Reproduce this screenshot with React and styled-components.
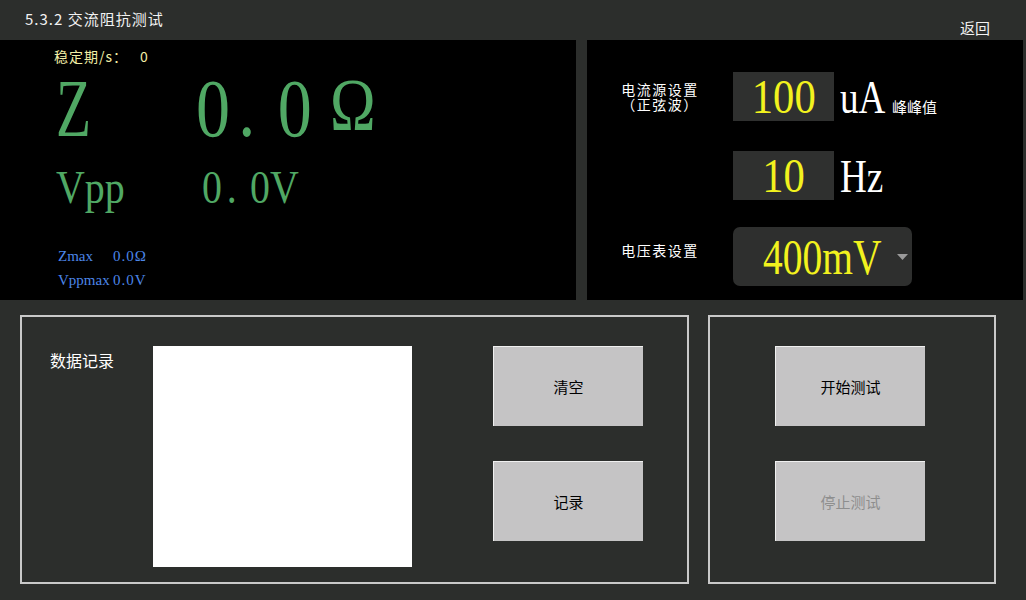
import React from 'react';
import styled, { createGlobalStyle } from 'styled-components';

const cjk = `"Noto Sans CJK SC", "Noto Sans", sans-serif`;
const serif = `"Liberation Serif", "Noto Sans CJK SC", serif`;

const Global = createGlobalStyle`
  html, body {
    margin: 0;
    padding: 0;
    background: #2c2e2c;
  }
`;

/** PAGE **/
const Page = styled.div`
  width: 1026px;
  height: 600px;
  background: #2c2e2c;
  display: flex;
  flex-direction: column;
  overflow: hidden;
`;

const Header = styled.header`
  height: 40px;
  display: flex;
  justify-content: space-between;
  padding: 0 36px 0 25px;
  box-sizing: border-box;
  font-family: ${cjk};
  color: #f2f2f2;
`;

const Title = styled.div`
  font-size: 15px;
  line-height: 20px;
  letter-spacing: 1px;
  margin-top: 9px;
`;

const Back = styled.div`
  align-self: flex-end;
  font-size: 15px;
  line-height: 20px;
  margin-bottom: 2px;
`;

const TopRow = styled.div`
  display: grid;
  grid-template-columns: 576px 436px;
  column-gap: 11px;
  height: 260px;
`;

/** METER (left black panel) **/
const Meter = styled.section`
  background: #000;
  display: flex;
  flex-direction: column;
  padding: 7px 0 8px 56px;
`;

const Stable = styled.div`
  font-family: ${cjk};
  font-size: 14px;
  line-height: 18px;
  letter-spacing: 1px;
  color: #f2eea6;
  margin-left: -2px;

  & span {
    margin-left: 12px;
  }
`;

const BigRow = styled.div`
  display: flex;
  align-items: baseline;
  font-family: ${serif};
  font-size: ${(p) => p.$size}px;
  line-height: 1;
  color: #50a864;
  margin-top: ${(p) => p.$top}px;
`;

const Symbol = styled.span`
  display: inline-block;
  flex-shrink: 0;
  width: ${(p) => p.$w}px;
  transform: scaleX(${(p) => p.$scale});
  transform-origin: left;
`;

const Reading = styled.span`
  display: inline-block;
  white-space: nowrap;
  transform: scaleX(${(p) => p.$scale});
  transform-origin: left;
`;

const Dot = styled.span`
  display: inline-block;
  box-sizing: border-box;
  width: 0.7em;
  padding-left: 0.12em;
`;

const Ohm = styled.span`
  font-size: 74px;
  margin-left: 22px;
  vertical-align: 6px;
`;

const MaxList = styled.div`
  margin-top: auto;
  margin-left: 2px;
  font-family: ${serif};
  font-size: 15px;
  line-height: 24px;
  color: #4c86e8;
`;

const MaxRow = styled.div`
  display: grid;
  grid-template-columns: 55px auto;
  white-space: nowrap;

  & span + span {
    letter-spacing: 1px;
  }
`;

/** SETTINGS (right black panel) **/
const Settings = styled.section`
  background: #000;
  display: flex;
  flex-direction: column;
  padding-top: 32px;
`;

const SettingRow = styled.div`
  display: grid;
  grid-template-columns: 146px auto;
  align-items: center;
  height: ${(p) => p.$h}px;
  margin-top: ${(p) => p.$gap || 0}px;
`;

const FieldLabel = styled.div`
  font-family: ${cjk};
  font-size: 14px;
  line-height: 15px;
  letter-spacing: 1.5px;
  color: #fff;
  text-align: center;
  padding-bottom: ${(p) => p.$lift || 0}px;
`;

const Controls = styled.div`
  display: flex;
  align-items: baseline;
`;

const NumBox = styled.div`
  width: 101px;
  height: 49px;
  background: #2f302f;
  display: flex;
  justify-content: center;
  align-items: center;
  font-family: ${serif};
  font-size: 49px;
  line-height: 1;
  color: #f2f21e;

  & span {
    display: inline-block;
    transform: scaleX(0.87);
  }
`;

const Unit = styled.span`
  display: inline-block;
  width: ${(p) => p.$w}px;
  margin-left: 6px;
  font-family: ${serif};
  font-size: 47px;
  line-height: 1;
  color: #fff;
  white-space: nowrap;
  transform: scaleX(0.79);
  transform-origin: left;
`;

const Suffix = styled.span`
  font-family: ${cjk};
  font-size: 15px;
  color: #fff;
`;

const Select = styled.div`
  box-sizing: border-box;
  width: 179px;
  height: 59px;
  background: #2e2f2e;
  border-radius: 7px;
  display: flex;
  align-items: center;
  padding: 0 4px 0 30px;
`;

const SelectValue = styled.span`
  flex: 1;
  min-width: 0;
  white-space: nowrap;
  font-family: ${serif};
  font-size: 50px;
  line-height: 1;
  color: #f2f21e;
  transform: scaleX(0.79);
  transform-origin: left;
`;

/** BOTTOM BOXES **/
const BottomRow = styled.div`
  display: flex;
  gap: 19px;
  padding: 15px 0 0 20px;
`;

const Frame = styled.div`
  box-sizing: border-box;
  width: ${(p) => p.$w}px;
  height: 269px;
  border: 2px solid #c9c9c9;
  display: flex;
  align-items: flex-start;
  padding: 29px 0 0 ${(p) => p.$pl}px;
`;

const Caption = styled.div`
  width: 103px;
  margin-top: 4px;
  font-family: ${cjk};
  font-size: 16px;
  line-height: 20px;
  color: #fff;
`;

const LogArea = styled.div`
  width: 259px;
  height: 221px;
  background: #fff;
`;

const ButtonStack = styled.div`
  display: flex;
  flex-direction: column;
  gap: 35px;
  margin-left: ${(p) => p.$ml || 0}px;
`;

const Button = styled.button`
  box-sizing: border-box;
  width: 150px;
  height: 80px;
  padding: 0;
  background: #c5c4c5;
  border: none;
  border-top: 1px solid #f0f0f0;
  border-left: 1px solid #f0f0f0;
  font-family: ${cjk};
  font-size: 15px;
  color: #000;

  &:disabled {
    color: #8e8e8e;
  }
`;

export default function App() {
  return (
    <Page>
      <Global />
      <Header>
        <Title>5.3.2 交流阻抗测试</Title>
        <Back>返回</Back>
      </Header>

      <TopRow>
        <Meter>
          <Stable>
            稳定期/s：<span>0</span>
          </Stable>
          <BigRow $size={82} $top={3}>
            <Symbol $w={140} $scale={0.7}>Z</Symbol>
            <Reading $scale={0.83}>
              0<Dot>.</Dot>0<Ohm>Ω</Ohm>
            </Reading>
          </BigRow>
          <BigRow $size={47} $top={14}>
            <Symbol $w={146} $scale={0.85}>Vpp</Symbol>
            <Reading $scale={0.85}>
              0<Dot>.</Dot>0V
            </Reading>
          </BigRow>
          <MaxList>
            <MaxRow>
              <span>Zmax</span>
              <span>0.0Ω</span>
            </MaxRow>
            <MaxRow>
              <span>Vppmax</span>
              <span>0.0V</span>
            </MaxRow>
          </MaxList>
        </Meter>

        <Settings>
          <SettingRow $h={49}>
            <FieldLabel>
              电流源设置
              <br />
              （正弦波）
            </FieldLabel>
            <Controls>
              <NumBox>
                <span>100</span>
              </NumBox>
              <Unit $w={52}>uA</Unit>
              <Suffix>峰峰值</Suffix>
            </Controls>
          </SettingRow>
          <SettingRow $h={49} $gap={30}>
            <div />
            <Controls>
              <NumBox>
                <span>10</span>
              </NumBox>
              <Unit $w={52}>Hz</Unit>
            </Controls>
          </SettingRow>
          <SettingRow $h={59} $gap={27}>
            <FieldLabel $lift={12}>电压表设置</FieldLabel>
            <Select>
              <SelectValue>400mV</SelectValue>
              <svg width="11" height="6" viewBox="0 0 11 6">
                <polygon points="0,0 11,0 5.5,6" fill="#9a9a9a" />
              </svg>
            </Select>
          </SettingRow>
        </Settings>
      </TopRow>

      <BottomRow>
        <Frame $w={669} $pl={28}>
          <Caption>数据记录</Caption>
          <LogArea />
          <ButtonStack $ml={81}>
            <Button>清空</Button>
            <Button>记录</Button>
          </ButtonStack>
        </Frame>
        <Frame $w={288} $pl={65}>
          <ButtonStack>
            <Button>开始测试</Button>
            <Button disabled>停止测试</Button>
          </ButtonStack>
        </Frame>
      </BottomRow>
    </Page>
  );
}
